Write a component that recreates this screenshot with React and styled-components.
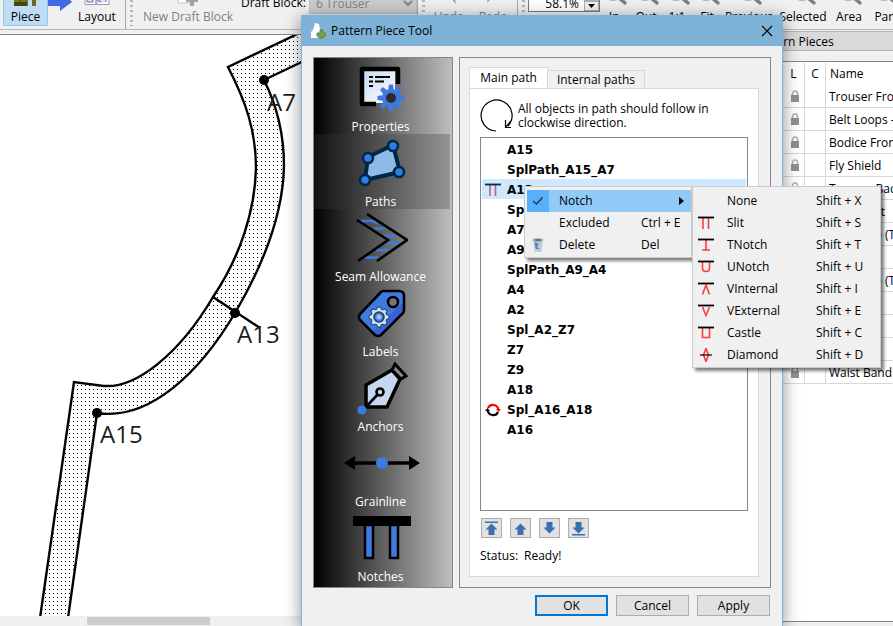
import React, { useState } from "react";
import styled, { createGlobalStyle, css } from "styled-components";

const GlobalStyle = createGlobalStyle`
  * {
    box-sizing: border-box;
  }
  body {
    margin: 0;
    background: #f0f0f0;
    color: #000;
    font-family: "Open Sans", "Noto Sans", sans-serif;
    font-size: 12px;
    line-height: 14px;
  }
  button, input, select {
    font: inherit;
    color: inherit;
    margin: 0;
    padding: 0;
  }
  button {
    border: 0;
    background: none;
    white-space: nowrap;
  }
  ul {
    list-style: none;
    margin: 0;
    padding: 0;
  }
  svg {
    display: block;
    flex: none;
  }
`;

const Desktop = styled.div`
  position: relative;
  display: flex;
  flex-direction: column;
  height: 100vh;
  overflow: hidden;
`;

/* ---------- main window ---------- */

const Toolbar = styled.header`
  display: flex;
  align-items: flex-end;
  height: 30px;
  flex: none;
  overflow: hidden;
  border-bottom: 1px solid #b4b8b8;
`;
const ToolGroup = styled.div`
  display: flex;
  align-items: flex-end;
  flex: none;
  height: 60px;
  width: ${(p) => p.$width}px;
  border-right: ${(p) => (p.$last ? "0" : "1px solid #a8a8a8")};
  padding: 0 0 3px ${(p) => p.$indent || 0}px;
`;
const Handle = styled.div`
  width: 3px;
  height: 56px;
  margin: 0 3px 0 4px;
  flex: none;
  background: repeating-linear-gradient(#b4b4b4 0 2px, transparent 2px 5px);
`;
const ToolButton = styled.button`
  display: flex;
  flex-direction: column;
  align-items: center;
  justify-content: flex-end;
  gap: ${(p) => p.$gap || 4}px;
  height: 50px;
  flex: none;
  width: ${(p) => p.$width}px;
  padding-bottom: 1px;
  border: 1px solid ${(p) => (p.$active ? "#90c8f6" : "transparent")};
  background: ${(p) => (p.$active ? "#c0dcf3" : "transparent")};
  color: ${(p) => (p.disabled ? "#808080" : "#000")};
`;
const DraftField = styled.label`
  display: flex;
  align-items: center;
  gap: 3px;
  white-space: nowrap;
  padding-bottom: 12px;
  margin-left: 1px;
`;
const DraftSelect = styled.select`
  width: 108px;
  height: 22px;
  padding-left: 2px;
  border: 1px solid #bfbfbf;
  border-radius: 0;
  background: #cccccc;
  color: #838383;
  opacity: 1;
`;
const ZoomField = styled.div`
  display: flex;
  width: 72px;
  height: 22px;
  flex: none;
  margin-bottom: 14px;
  border: 1px solid #7a7a7a;
  background: #fff;
`;
const ZoomInput = styled.input`
  flex: 1;
  min-width: 0;
  border: 0;
  text-align: right;
  padding: 5px 5px 0 0;
`;
const Spinner = styled.div`
  display: flex;
  flex-direction: column;
  justify-content: flex-end;
  width: 15px;
`;
const SpinButton = styled.button`
  display: flex;
  align-items: center;
  justify-content: center;
  height: 10px;
  border: 1px solid #adadad;
  background: #f0f0f0;
`;

const Workspace = styled.main`
  display: flex;
  flex: 1;
  min-height: 0;
`;
const CanvasColumn = styled.section`
  display: flex;
  flex-direction: column;
  flex: 1;
  min-width: 0;
  padding-top: 4px;
`;
const Canvas = styled.svg`
  flex: 1;
  min-height: 0;
  width: 100%;
  background: #fff;
  border-top: 1px solid #828790;
  font-size: 24px;
`;
const ScrollTrack = styled.div`
  height: 10px;
  flex: none;
  padding: 1px 0 0 87px;
`;
const ScrollThumb = styled.div`
  width: 123px;
  height: 8px;
  background: #cdcdcd;
`;

const Dock = styled.aside`
  display: flex;
  flex-direction: column;
  flex: none;
  width: 143px;
  overflow: hidden;
  padding-top: 1px;
`;
const DockTitle = styled.h2`
  margin: 0 0 10px;
  padding: 3px 4px 1px;
  border-top: 1px solid #b4b4b4;
  border-bottom: 1px solid #b4b4b4;
  background: #d9d9d9;
  font-size: 12px;
  font-weight: normal;
  line-height: 14px;
`;
const DockBody = styled.div`
  flex: 1;
  min-height: 0;
  margin-bottom: 4px;
  padding-left: 33px;
  border-top: 1px solid #83838f;
  border-bottom: 1px solid #83838f;
  background: #fff;
`;
const PieceTable = styled.table`
  width: 180px;
  border-collapse: separate;
  border-spacing: 0;
  table-layout: fixed;

  th,
  td {
    height: 23px;
    padding: 0 0 0 4px;
    border-right: 1px solid #d8d8d8;
    text-align: left;
    font-weight: normal;
    white-space: nowrap;
  }
  td {
    padding: 2px 0 0 3px;
    border-bottom: 1px solid #d8d8d8;
  }
  th:not(:last-child) {
    padding: 0;
    text-align: center;
  }
  td:first-child {
    padding: 0 0 0 7px;
  }
`;
const Col = styled.col`
  width: ${(p) => p.$width};
`;

/* ---------- dialog ---------- */

const Dialog = styled.div`
  position: absolute;
  top: 15px;
  left: 301px;
  bottom: 0;
  width: 482px;
  display: flex;
  flex-direction: column;
  background: #f0f0f0;
  border: solid #7eb2d7;
  border-width: 0 1px;
  box-shadow: 0 3px 16px rgba(0, 0, 0, 0.45);
`;
const TitleBar = styled.div`
  display: flex;
  align-items: center;
  gap: 5px;
  height: 31px;
  flex: none;
  padding: 0 9px 0 8px;
  background: #7eb2d7;
`;
const Title = styled.h1`
  flex: 1;
  margin: 0;
  font-size: 12px;
  font-weight: normal;
`;
const DialogBody = styled.div`
  display: flex;
  flex: 1;
  min-height: 0;
  gap: 6px;
  padding: 11px 11px 0;
`;
const Sidebar = styled.nav`
  width: 140px;
  flex: none;
  padding: 1px 2px 0 0;
  border: 1px solid #828790;
  background: linear-gradient(90deg, #000, #4d4d4d 40%, #bebebe);
`;
const SideItem = styled.button`
  display: flex;
  flex-direction: column;
  align-items: center;
  width: 100%;
  height: 75px;
  padding-right: 3px;
  color: #fff;
  background: ${(p) => (p.$active ? "rgba(60, 60, 60, 0.3)" : "transparent")};
`;
const SideIcon = styled.span`
  display: flex;
  align-items: center;
  justify-content: center;
  height: 61px;
  padding: 0 0 4px 2px;
`;
const Frame = styled.section`
  display: flex;
  flex-direction: column;
  flex: 1;
  min-width: 0;
  padding: 9px 11px 10px 9px;
  border: 1px solid #828790;
`;
const Tabs = styled.div`
  display: flex;
  align-items: flex-end;
  margin-bottom: -1px;
`;
const Tab = styled.button`
  height: ${(p) => (p.$active ? 22 : 19)}px;
  width: ${(p) => (p.$active ? 79 : 97)}px;
  border: 1px solid #d9d9d9;
  border-left-width: ${(p) => (p.$active ? 1 : 0)}px;
  border-bottom-color: ${(p) => (p.$active ? "#fff" : "#d9d9d9")};
  background: ${(p) => (p.$active ? "#fff" : "#f0f0f0")};
`;
const TabPanel = styled.div`
  display: flex;
  flex-direction: column;
  flex: 1;
  min-height: 0;
  padding: 10px;
  border: 1px solid #d9d9d9;
  background: #fff;
`;
const Hint = styled.p`
  display: flex;
  align-items: center;
  gap: 5px;
  margin: 0 0 4px;
`;
const PathList = styled.ul`
  flex: 1;
  min-height: 0;
  padding: 1px;
  border: 1px solid #828790;
`;
const PathItem = styled.li`
  position: relative;
  display: flex;
  align-items: center;
  gap: 6px;
  height: 20px;
  padding: 2px 0 0 3px;
  background: ${(p) => (p.$selected ? "#cde8ff" : "transparent")};
`;
const PathName = styled.span`
  font-family: "DejaVu Sans", sans-serif;
  font-weight: bold;
`;
const IconSlot = styled.span`
  display: flex;
  align-items: center;
  justify-content: center;
  width: 16px;
  flex: none;
`;
const MoveRow = styled.div`
  display: flex;
  gap: 8px;
  padding: 7px 1px 0;
`;
const MoveButton = styled.button`
  display: flex;
  align-items: center;
  justify-content: center;
  width: 21px;
  height: 20px;
  border: 1px solid #adadad;
  background: #e1e1e1;
`;
const Status = styled.p`
  display: flex;
  gap: 6px;
  margin: 11px 0 3px;
`;
const Footer = styled.div`
  display: flex;
  justify-content: flex-end;
  gap: 8px;
  padding: 7px 12px 10px;
`;
const PushButton = styled.button`
  width: 73px;
  height: 21px;
  border: ${(p) => (p.$primary ? "2px solid #0078d7" : "1px solid #adadad")};
  background: #e1e1e1;
`;

/* ---------- menus ---------- */

const Menu = styled.ul`
  position: absolute;
  z-index: 2;
  border: 1px solid #ccc;
  background: #f0f0f0;
  box-shadow: 3px 3px 3px rgba(0, 0, 0, 0.5);
  ${(p) =>
    p.$sub
      ? css`
          top: -4px;
          left: 165px;
          width: 189px;
          padding: 3px 2px 1px;
        `
      : css`
          top: 7px;
          left: 42px;
          width: 168px;
          padding: 3px 0 1px 2px;
        `}
`;
const MenuEntry = styled.li`
  position: relative;
`;
const MenuButton = styled.button`
  display: flex;
  align-items: center;
  width: 100%;
  height: 22px;
  text-align: left;
  background: ${(p) => (p.$active ? "#91c9f7" : "transparent")};
`;
const MenuIcon = styled.span`
  display: flex;
  align-items: center;
  justify-content: center;
  width: 22px;
  height: 22px;
  flex: none;
  margin-right: 10px;
  background: ${(p) => (p.$active ? "#56b0fa" : "transparent")};
`;
const MenuLabel = styled.span`
  flex: 1;
`;
const Shortcut = styled.span`
  width: ${(p) => p.$width}px;
`;

/* ---------- icons ---------- */

const notchShapes = {
  slit: "M5 2V13M10.5 2V13",
  tnotch: "M8 2V12M4 12H12",
  unotch: "M4.5 2V8Q4.5 11.5 8 11.5T11.5 8V2",
  vinternal: "M4.5 12.5L8 3L11.5 12.5",
  vexternal: "M4.5 3L8 11.5L11.5 3",
  castle: "M4.5 2V11.5H11.5V2",
  diamond: "M8 0.5L10.5 7L8 13.5L5.5 7Z",
};

const NotchIcon = ({ kind, muted }) => (
  <svg width="16" height="14" fill="none">
    <path d={notchShapes[kind]} stroke={muted ? "#c06080" : "#ff3c3c"} strokeWidth="1.6" />
    <path
      d={kind === "diamond" ? "M2 7H14" : "M0 1.5H16"}
      stroke={muted ? "#0c2a3c" : "#000"}
      strokeWidth={kind === "diamond" ? 1.2 : 1.8}
    />
  </svg>
);

const LockIcon = () => (
  <svg width="10" height="13">
    <path d="M2.5 6V3.5a2.5 2.5 0 0 1 5 0V6" fill="none" stroke="#b0b0b0" strokeWidth="1.5" />
    <rect x="1" y="5" width="8" height="7" fill="#909090" />
  </svg>
);

const MagnifierIcon = ({ tint }) => (
  <svg width="26" height="26">
    <circle cx="12" cy="12" r="9" fill={tint || "#e8eaec"} stroke="#b4b4b4" strokeWidth="2" />
    <path d="M18 19L24 24" stroke="#808080" strokeWidth="3.5" strokeLinecap="round" />
  </svg>
);

const PieceIcon = () => (
  <svg width="32" height="32">
    <path d="M4 4H18V32H4Z" fill="#77761a" />
    <path d="M9 4H11V32H9Z" fill="#5a590f" />
    <path d="M22 0H26V32H22Z" fill="#6b6a18" />
    <path d="M4 28H17V32H4Z" fill="#46450f" />
  </svg>
);

const LayoutIcon = () => (
  <svg width="26" height="32" stroke="#9a9ab4">
    <path d="M1 4H25V30.5H1Z" fill="#fff" />
    <path d="M3 28V16L9 18V28ZM12 30V25L16 28V18H22V28" fill="#e4dcf4" stroke="#7464a8" />
  </svg>
);

const NewBlockIcon = () => (
  <svg width="24" height="32">
    <path d="M2 2H18V29H2Z" fill="#fff" stroke="#c2c2c2" />
    <path d="M14 20H18V25H22V28H18V32H14V28H10V25H14Z" fill="#a2a2a2" />
  </svg>
);

const FlowArrow = () => (
  <svg width="24" height="34">
    <path d="M0 4H12V-4L24 10L12 19V14H0Z" fill="#4169e1" />
  </svg>
);

const TurnIcon = ({ flip }) => (
  <svg width="30" height="28">
    <path d={flip ? "M14 17L22 26L20 15Z" : "M16 17L9 25L11 15Z"} fill="#9a9a9a" />
  </svg>
);

const PieceToolIcon = () => (
  <svg width="16" height="17">
    <path d="M5 1L9 2L10 8L11 11L7 16H1V10L3 8Z" fill="#fff" />
    <path d="M10 8H13V11H16V14H13V17H10V14H7V11H10Z" fill="#7aa04f" stroke="#5c8a3c" />
  </svg>
);

const gearTeeth = [0, 45, 90, 135, 180, 225, 270, 315];

const PropertiesIcon = () => (
  <svg width="50" height="50">
    <defs>
      <linearGradient id="sheet" x1="0" y1="0" x2="1" y2="1">
        <stop offset="0" stopColor="#c4daf2" />
        <stop offset="1" stopColor="#fff" />
      </linearGradient>
    </defs>
    <rect x="6" y="7" width="32" height="33" fill="url(#sheet)" />
    <path d="M19 41H5V6H41V21" fill="none" stroke="#000" strokeWidth="4.5" strokeLinejoin="round" />
    <path d="M12 14H16M12 18.5H16M12 23H16M18 14H33M18 18.5H27" stroke="#000" strokeWidth="2" />
    <g fill="#3e7be0">
      <circle cx="34" cy="35" r="9" />
      {gearTeeth.map((a) => (
        <path key={a} d="M31 28L32 21.5H36L37 28Z" transform={`rotate(${a} 34 35)`} />
      ))}
    </g>
    <circle cx="34" cy="35" r="5" fill="#2b2b2b" />
  </svg>
);

const PathsIcon = () => (
  <svg width="48" height="50">
    <path
      d="M10 19L35 7L42 34L7 42Z"
      fill="#8ebae8"
      stroke="#002746"
      strokeWidth="4"
      strokeLinejoin="round"
    />
    {[[10, 20], [35, 8], [41, 34], [7, 42]].map(([x, y]) => (
      <circle key={x} cx={x} cy={y} r="5" fill="#2f7de4" stroke="#002746" strokeWidth="2.6" />
    ))}
  </svg>
);

const SeamIcon = () => (
  <svg width="52" height="50" fill="none">
    <path
      d="M5 8H17L21 10.5M18 15.5H29M27 23H40M31 30H44M20 37H32M9 44.5H22"
      stroke="#3e7be0"
      strokeWidth="2.5"
    />
    <path d="M1 7L32 27L2 48M11 1L51 27L21 48" stroke="#000" strokeWidth="2.6" />
  </svg>
);

const LabelsIcon = () => (
  <svg width="50" height="50">
    <defs>
      <linearGradient id="tag" x1="0" y1="0" x2="1" y2="1">
        <stop offset="0.6" stopColor="#3e7be0" />
        <stop offset="0.62" stopColor="#3c5fd6" />
      </linearGradient>
    </defs>
    <path
      d="M26 3H42Q47 3 47 8V22Q47 24 46 25L24 47Q21 49 18 47L3 32Q1 29 3 26L24 4Q25 3 26 3Z"
      fill="url(#tag)"
      stroke="#000"
      strokeWidth="2.6"
    />
    <circle cx="36" cy="14" r="5" fill="#777" stroke="#000" strokeWidth="2.6" />
    <g fill="#cfe0f4" stroke="#1f3d66">
      {gearTeeth.map((a) => (
        <path key={a} d="M19 23L20.5 19H23.5L25 23Z" transform={`rotate(${a} 22 29)`} />
      ))}
      <circle cx="22" cy="29" r="7.5" stroke="none" />
      <circle cx="22" cy="29" r="5" fill="#3e7be0" strokeWidth="1.5" />
      <circle cx="22" cy="29" r="2.5" fill="#9ec2ee" stroke="none" />
    </g>
  </svg>
);

const AnchorsIcon = () => (
  <svg width="52" height="54">
    <path
      d="M10 24L36 9L44 18L31 46H10Z"
      fill="#c6d8f0"
      stroke="#000"
      strokeWidth="3.5"
      strokeLinejoin="round"
    />
    <path d="M39 3L50 15L45 18L36 9Z" fill="#888" stroke="#000" strokeWidth="3" />
    <path d="M10 46L23 32" stroke="#000" strokeWidth="2.6" />
    <circle cx="24" cy="31" r="3.5" fill="#c6d8f0" stroke="#000" strokeWidth="2.6" />
    <circle cx="6" cy="49" r="4.5" fill="#3e7be0" />
  </svg>
);

const GrainlineIcon = () => (
  <svg width="76" height="14">
    <path d="M8 7H68" stroke="#000" strokeWidth="3.5" />
    <path d="M0 7L11 0V14ZM76 7L65 0V14Z" />
    <circle cx="38" cy="7" r="6" fill="#3e7be0" />
  </svg>
);

const NotchesIcon = () => (
  <svg width="58" height="45">
    <path
      d="M12 10H20V43H12ZM37 10H45V43H37Z"
      fill="#3e7be0"
      stroke="#000"
      strokeWidth="2.5"
    />
    <rect y="1" width="58" height="10" />
  </svg>
);

const ClockwiseIcon = () => (
  <svg width="33" height="34" fill="none" stroke="#000" strokeWidth="1.2">
    <path d="M16 32A15.500 15.500 0 1 1 28 27M25.500 21V28.500H31M25.500 28.500L31 22" />
  </svg>
);

const ReverseIcon = () => (
  <svg width="16" height="14" fill="none" strokeWidth="2.2">
    <path d="M3 5A5.400 5.400 0 0 1 13.300 7" stroke="#f00" />
    <path d="M11 6H16L13.500 9Z" fill="#f00" />
    <path d="M13 9A5.400 5.400 0 0 1 2.700 7" stroke="#000" />
    <path d="M0 8H5L2.500 5Z" fill="#000" />
  </svg>
);

const MoveIcon = ({ down, end }) => (
  <svg width="13" height="15" fill="#3c6eb4">
    <g transform={down ? "rotate(180 6.5 7.5)" : undefined}>
      <path d="M6.5 2.5L12.5 8.5H9.5V14H3.5V8.5H0.5Z" />
      {end && <rect x="0" y="0.5" width="13" height="1.5" />}
    </g>
  </svg>
);

const CheckIcon = () => (
  <svg width="12" height="10" fill="none">
    <path d="M1 5L4.5 8L10.5 1.5" stroke="#243a4c" strokeWidth="1.5" />
  </svg>
);

const TrashIcon = () => (
  <svg width="14" height="16">
    <path d="M2 3L3.5 15H10.5L12 3Z" fill="#c3ccd6" />
    <path d="M4 5L8 7L6 10L9 12H5L4 9Z" fill="#5486c8" />
    <ellipse cx="7" cy="3" rx="5.5" ry="2" fill="#aab4be" />
    <ellipse cx="7" cy="3" rx="3.5" ry="1" fill="#6a747e" />
  </svg>
);

const CloseIcon = () => (
  <svg width="12" height="12" stroke="#000" strokeWidth="1.1">
    <path d="M1 1L11 11M11 1L1 11" />
  </svg>
);

/* ---------- data ---------- */

const zoomTools = [
  { label: "In", width: 28 },
  { label: "Out", width: 36 },
  { label: "1:1", width: 26 },
  { label: "Fit", width: 34 },
  { label: "Previous", width: 50 },
  { label: "Selected", width: 58 },
  { label: "Area", width: 34 },
  { label: "Pan", width: 38, tint: "#a8c8f0" },
];

const pieces = [
  "Trouser Front",
  "Belt Loops - 7",
  "Bodice Front",
  "Fly Shield",
  "Trouser Back",
  "Cuff Front",
  "Back Flap (Type 1)",
  "Facing",
  "Back Flap (Type 2)",
  "Collar",
  "Yoke",
  "Sleeve",
  "Waist Band",
];

const sections = [
  ["Properties", PropertiesIcon],
  ["Paths", PathsIcon],
  ["Seam Allowance", SeamIcon],
  ["Labels", LabelsIcon],
  ["Anchors", AnchorsIcon],
  ["Grainline", GrainlineIcon],
  ["Notches", NotchesIcon],
];

const pathNodes = [
  { name: "A15" },
  { name: "SplPath_A15_A7" },
  { name: "A13", selected: true },
  { name: "SplPath_A15_A7" },
  { name: "A7" },
  { name: "A9" },
  { name: "SplPath_A9_A4" },
  { name: "A4" },
  { name: "A2" },
  { name: "Spl_A2_Z7" },
  { name: "Z7" },
  { name: "Z9" },
  { name: "A18" },
  { name: "Spl_A16_A18", reversed: true },
  { name: "A16" },
];

const notches = [
  ["None", "X"],
  ["Slit", "S", "slit"],
  ["TNotch", "T", "tnotch"],
  ["UNotch", "U", "unotch"],
  ["VInternal", "I", "vinternal"],
  ["VExternal", "E", "vexternal"],
  ["Castle", "C", "castle"],
  ["Diamond", "D", "diamond"],
];

/* ---------- components ---------- */

const MainToolbar = () => (
  <Toolbar>
    <ToolGroup $width={126} $indent={3}>
      <ToolButton $active $width={45}>
        <PieceIcon />
        Piece
      </ToolButton>
      <FlowArrow />
      <ToolButton $width={50}>
        <LayoutIcon />
        Layout
      </ToolButton>
    </ToolGroup>
    <ToolGroup $width={292}>
      <Handle />
      <ToolButton disabled $width={104}>
        <NewBlockIcon />
        New Draft Block
      </ToolButton>
      <DraftField>
        Draft Block:
        <DraftSelect disabled defaultValue="6 Trouser">
          <option>6 Trouser</option>
        </DraftSelect>
      </DraftField>
    </ToolGroup>
    <ToolGroup $width={100}>
      <Handle />
      <ToolButton disabled $width={42}>
        <TurnIcon flip />
        Undo
      </ToolButton>
      <ToolButton disabled $width={46}>
        <TurnIcon />
        Redo
      </ToolButton>
    </ToolGroup>
    <ToolGroup $width={386} $last>
      <Handle />
      <ZoomField>
        <ZoomInput aria-label="Zoom" defaultValue="58.1%" />
        <Spinner>
          <SpinButton aria-label="Zoom in">
            <svg width="7" height="4"><path d="M0 4L3.5 0L7 4Z" /></svg>
          </SpinButton>
          <SpinButton aria-label="Zoom out">
            <svg width="7" height="4"><path d="M0 0L3.5 4L7 0Z" /></svg>
          </SpinButton>
        </Spinner>
      </ZoomField>
      {zoomTools.map((tool) => (
        <ToolButton key={tool.label} $width={tool.width} $gap={5}>
          <MagnifierIcon tint={tool.tint} />
          {tool.label}
        </ToolButton>
      ))}
    </ToolGroup>
  </Toolbar>
);

const Drawing = () => (
  <Canvas>
    <defs>
      <pattern id="dots" width="4" height="4" patternUnits="userSpaceOnUse">
        <rect x="1" y="1" width="1" height="1" shapeRendering="crispEdges" />
      </pattern>
    </defs>
    <g transform="translate(0 -35)" stroke="#000" strokeWidth="2.4" fill="none">
      <path
        d="M40 618L74 382L100 385.5C135 391 180 353 213 297C240 257 255 211 256 168C256 131 246 102 228 67L310 28V58L264 80C276 104 284 135 284 166C283 215 262 267 235 313C200 372 150 421 97 413L68 618"
        fill="url(#dots)"
      />
      <path d="M213 297L260 328" />
      <g fill="#000" stroke="none">
        <circle cx="264" cy="80" r="5" />
        <circle cx="235" cy="313" r="5" />
        <circle cx="97" cy="413" r="5" />
      </g>
      <g fill="#1c1c1c" stroke="none">
        <text x="267" y="111">A7</text>
        <text x="237" y="343">A13</text>
        <text x="100" y="443">A15</text>
      </g>
    </g>
  </Canvas>
);

const PiecesDock = () => (
  <Dock>
    <DockTitle>Pattern Pieces</DockTitle>
    <DockBody>
      <PieceTable>
        <colgroup>
          <Col $width="22px" />
          <Col $width="21px" />
          <Col $width="auto" />
        </colgroup>
        <thead>
          <tr>
            <th>L</th>
            <th>C</th>
            <th>Name</th>
          </tr>
        </thead>
        <tbody>
          {pieces.map((name) => (
            <tr key={name}>
              <td>
                <LockIcon />
              </td>
              <td />
              <td>{name}</td>
            </tr>
          ))}
        </tbody>
      </PieceTable>
    </DockBody>
  </Dock>
);

const NotchMenu = () => (
  <Menu $sub>
    {notches.map(([label, key, kind]) => (
      <MenuEntry key={label}>
        <MenuButton>
          <MenuIcon>{kind && <NotchIcon kind={kind} />}</MenuIcon>
          <MenuLabel>{label}</MenuLabel>
          <Shortcut $width={62}>Shift + {key}</Shortcut>
        </MenuButton>
      </MenuEntry>
    ))}
  </Menu>
);

const ContextMenu = () => (
  <Menu>
    <MenuEntry>
      <MenuButton $active>
        <MenuIcon $active>
          <CheckIcon />
        </MenuIcon>
        <MenuLabel>Notch</MenuLabel>
        <Shortcut $width={12}>
          <svg width="5" height="8"><path d="M0 0L5 4L0 8Z" /></svg>
        </Shortcut>
      </MenuButton>
      <NotchMenu />
    </MenuEntry>
    <MenuEntry>
      <MenuButton>
        <MenuIcon />
        <MenuLabel>Excluded</MenuLabel>
        <Shortcut $width={50}>Ctrl + E</Shortcut>
      </MenuButton>
    </MenuEntry>
    <MenuEntry>
      <MenuButton>
        <MenuIcon>
          <TrashIcon />
        </MenuIcon>
        <MenuLabel>Delete</MenuLabel>
        <Shortcut $width={50}>Del</Shortcut>
      </MenuButton>
    </MenuEntry>
  </Menu>
);

const MainPath = () => (
  <TabPanel>
    <Hint>
      <ClockwiseIcon />
      <span>
        All objects in path should follow in
        <br />
        clockwise direction.
      </span>
    </Hint>
    <PathList>
      {pathNodes.map((node, i) => (
        <PathItem key={i} $selected={node.selected}>
          <IconSlot>
            {node.selected && <NotchIcon kind="slit" muted />}
            {node.reversed && <ReverseIcon />}
          </IconSlot>
          <PathName>{node.name}</PathName>
          {node.selected && <ContextMenu />}
        </PathItem>
      ))}
    </PathList>
    <MoveRow>
      <MoveButton aria-label="Move to top">
        <MoveIcon end />
      </MoveButton>
      <MoveButton aria-label="Move up">
        <MoveIcon />
      </MoveButton>
      <MoveButton aria-label="Move down">
        <MoveIcon down />
      </MoveButton>
      <MoveButton aria-label="Move to bottom">
        <MoveIcon down end />
      </MoveButton>
    </MoveRow>
    <Status>
      <span>Status:</span>
      <span>Ready!</span>
    </Status>
  </TabPanel>
);

const PieceDialog = () => {
  const [section, setSection] = useState("Paths");

  return (
    <Dialog role="dialog" aria-labelledby="dialog-title">
      <TitleBar>
        <PieceToolIcon />
        <Title id="dialog-title">Pattern Piece Tool</Title>
        <button aria-label="Close">
          <CloseIcon />
        </button>
      </TitleBar>
      <DialogBody>
        <Sidebar>
          {sections.map(([label, Icon]) => (
            <SideItem key={label} $active={label === section} onClick={() => setSection(label)}>
              <SideIcon>
                <Icon />
              </SideIcon>
              {label}
            </SideItem>
          ))}
        </Sidebar>
        <Frame>
          <Tabs>
            <Tab $active>Main path</Tab>
            <Tab>Internal paths</Tab>
          </Tabs>
          <MainPath />
        </Frame>
      </DialogBody>
      <Footer>
        <PushButton $primary>OK</PushButton>
        <PushButton>Cancel</PushButton>
        <PushButton>Apply</PushButton>
      </Footer>
    </Dialog>
  );
};

const App = () => (
  <>
    <GlobalStyle />
    <Desktop>
      <MainToolbar />
      <Workspace>
        <CanvasColumn>
          <Drawing />
          <ScrollTrack>
            <ScrollThumb />
          </ScrollTrack>
        </CanvasColumn>
        <PiecesDock />
      </Workspace>
      <PieceDialog />
    </Desktop>
  </>
);

export default App;
